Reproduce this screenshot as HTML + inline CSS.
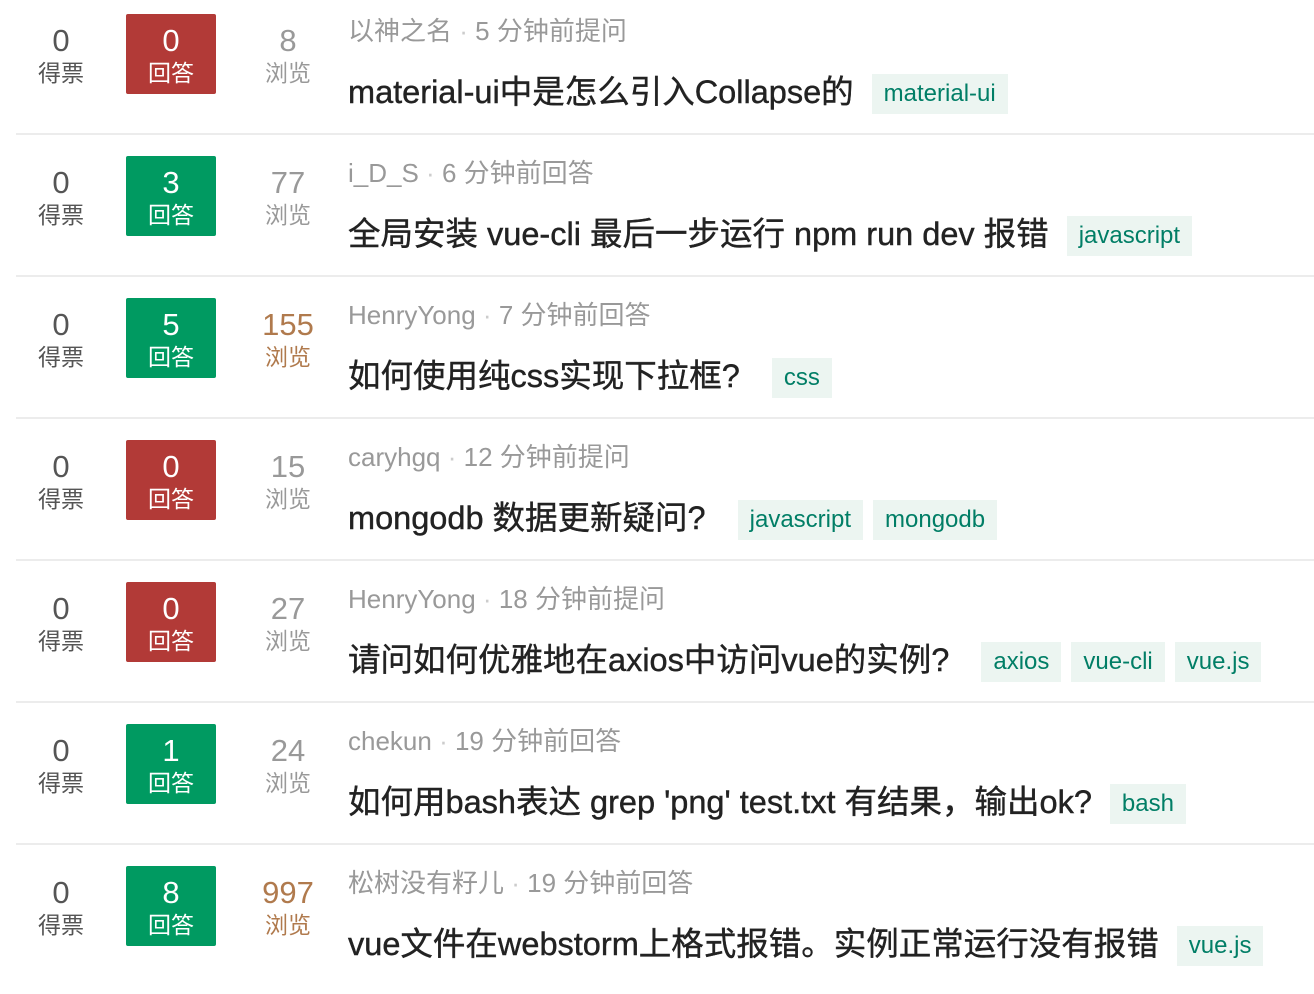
<!DOCTYPE html>
<html><head><meta charset="utf-8"><style>
*{margin:0;padding:0;box-sizing:border-box}
body{width:1314px;height:980px;overflow:hidden;background:#fff;font-family:"Liberation Sans","Noto Sans CJK SC",sans-serif}
.row{position:absolute;left:0;width:1314px;height:142px}
.sep{position:absolute;left:16px;right:0;bottom:7px;height:2px;background:#ececec}
.c{position:absolute;top:14px;width:90px;height:80px;text-align:center}
.n{font-size:31px;line-height:34px;padding-top:10px}
.l{font-size:23px;line-height:30px}
.v{left:16px;color:#555}
.a{left:126px;color:#fff;border-radius:2px}
.red{background:#b23a37}.grn{background:#009a61}
.b{left:243px;color:#999}
.hot{color:#b07a4d}
.meta{position:absolute;left:348px;top:14px;font-size:26px;line-height:34px;color:#999;white-space:nowrap}
.dot{color:#ccc}
.t{position:absolute;left:348px;top:72px;font-size:32.5px;line-height:40px;color:#222;white-space:nowrap;-webkit-text-stroke:0.4px #222}
.tag{display:inline-block;vertical-align:middle;background:#ecf5f1;color:#017e66;font-size:24px;line-height:40px;height:40px;padding:0 12px;margin-left:10px;-webkit-text-stroke:0}
</style></head><body>

<div class="row" style="top:0"><div class="c v"><div class="n">0</div><div class="l">得票</div></div><div class="c a red"><div class="n">0</div><div class="l">回答</div></div><div class="c b"><div class="n">8</div><div class="l">浏览</div></div>
<div class="meta">以神之名 <span class="dot">·</span> 5 分钟前提问</div>
<div class="t">material-ui中是怎么引入Collapse的<span class="tag" style="margin-left:18px">material-ui</span></div><div class="sep"></div></div>

<div class="row" style="top:142px"><div class="c v"><div class="n">0</div><div class="l">得票</div></div><div class="c a grn"><div class="n">3</div><div class="l">回答</div></div><div class="c b"><div class="n">77</div><div class="l">浏览</div></div>
<div class="meta">i_D_S <span class="dot">·</span> 6 分钟前回答</div>
<div class="t">全局安装 vue-cli 最后一步运行 npm run dev 报错<span class="tag" style="margin-left:18px">javascript</span></div><div class="sep"></div></div>

<div class="row" style="top:284px"><div class="c v"><div class="n">0</div><div class="l">得票</div></div><div class="c a grn"><div class="n">5</div><div class="l">回答</div></div><div class="c b hot"><div class="n">155</div><div class="l">浏览</div></div>
<div class="meta">HenryYong <span class="dot">·</span> 7 分钟前回答</div>
<div class="t">如何使用纯css实现下拉框?<span class="tag" style="margin-left:32px">css</span></div><div class="sep"></div></div>

<div class="row" style="top:426px"><div class="c v"><div class="n">0</div><div class="l">得票</div></div><div class="c a red"><div class="n">0</div><div class="l">回答</div></div><div class="c b"><div class="n">15</div><div class="l">浏览</div></div>
<div class="meta">caryhgq <span class="dot">·</span> 12 分钟前提问</div>
<div class="t">mongodb 数据更新疑问?<span class="tag" style="margin-left:32px">javascript</span><span class="tag">mongodb</span></div><div class="sep"></div></div>

<div class="row" style="top:568px"><div class="c v"><div class="n">0</div><div class="l">得票</div></div><div class="c a red"><div class="n">0</div><div class="l">回答</div></div><div class="c b"><div class="n">27</div><div class="l">浏览</div></div>
<div class="meta">HenryYong <span class="dot">·</span> 18 分钟前提问</div>
<div class="t">请问如何优雅地在axios中访问vue的实例?<span class="tag" style="margin-left:32px">axios</span><span class="tag">vue-cli</span><span class="tag">vue.js</span></div><div class="sep"></div></div>

<div class="row" style="top:710px"><div class="c v"><div class="n">0</div><div class="l">得票</div></div><div class="c a grn"><div class="n">1</div><div class="l">回答</div></div><div class="c b"><div class="n">24</div><div class="l">浏览</div></div>
<div class="meta">chekun <span class="dot">·</span> 19 分钟前回答</div>
<div class="t">如何用bash表达 grep 'png' test.txt 有结果，输出ok?<span class="tag" style="margin-left:18px">bash</span></div><div class="sep"></div></div>

<div class="row" style="top:852px"><div class="c v"><div class="n">0</div><div class="l">得票</div></div><div class="c a grn"><div class="n">8</div><div class="l">回答</div></div><div class="c b hot"><div class="n">997</div><div class="l">浏览</div></div>
<div class="meta">松树没有籽儿 <span class="dot">·</span> 19 分钟前回答</div>
<div class="t">vue文件在webstorm上格式报错。实例正常运行没有报错<span class="tag" style="margin-left:18px">vue.js</span></div></div>

</body></html>
